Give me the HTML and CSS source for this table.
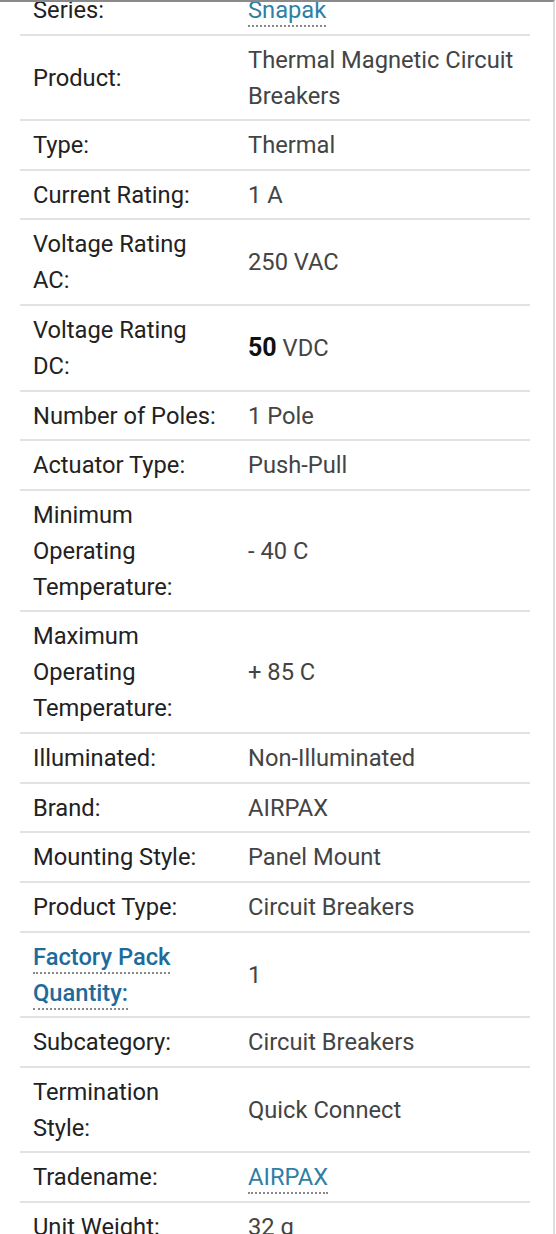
FILE: index.html
```html
<!DOCTYPE html>
<html>
<head>
<meta charset="utf-8">
<link rel="stylesheet" href="styles.css">
</head>
<body>
<div class="frame">
  <table class="specs">
    <colgroup><col class="c-label"><col class="c-value"></colgroup>
    <tr><th>Series:</th><td><a class="dot" href="#">Snapak</a></td></tr>
    <tr><th>Product:</th><td>Thermal Magnetic Circuit Breakers</td></tr>
    <tr><th>Type:</th><td>Thermal</td></tr>
    <tr><th>Current Rating:</th><td>1 A</td></tr>
    <tr><th>Voltage Rating AC:</th><td>250 VAC</td></tr>
    <tr><th>Voltage Rating DC:</th><td><b class="num">50</b> VDC</td></tr>
    <tr><th>Number of Poles:</th><td>1 Pole</td></tr>
    <tr><th>Actuator Type:</th><td>Push-Pull</td></tr>
    <tr><th>Minimum Operating Temperature:</th><td>- 40 C</td></tr>
    <tr><th>Maximum Operating Temperature:</th><td>+ 85 C</td></tr>
    <tr><th>Illuminated:</th><td>Non-Illuminated</td></tr>
    <tr><th>Brand:</th><td>AIRPAX</td></tr>
    <tr><th>Mounting Style:</th><td>Panel Mount</td></tr>
    <tr><th>Product Type:</th><td>Circuit Breakers</td></tr>
    <tr><th><a class="dot strong" href="#">Factory Pack Quantity:</a></th><td>1</td></tr>
    <tr><th>Subcategory:</th><td>Circuit Breakers</td></tr>
    <tr><th>Termination Style:</th><td>Quick Connect</td></tr>
    <tr><th>Tradename:</th><td><a class="dot" href="#">AIRPAX</a></td></tr>
    <tr><th>Unit Weight:</th><td>32 g</td></tr>
  </table>
</div>
</body>
</html>
```
FILE: styles.css
```css
html, body {
  margin: 0;
  padding: 0;
  background: #fff;
}
body {
  font-family: Roboto, "Noto Sans", sans-serif;
  overflow: hidden;
  height: 1234px;
}
.frame {
  width: 555px;
  height: 1234px;
  border-top: 2px solid #8a8a8a;
  border-right: 2px solid #dedede;
  box-sizing: border-box;
  overflow: hidden;
}
.specs {
  margin: -16px 0 0 20px;
  width: 510px;
  border-collapse: collapse;
  table-layout: fixed;
  font-size: 23.7px;
  line-height: 36px;
}
.c-label { width: 215px; }
.c-value { width: 295px; }
.specs th, .specs td {
  padding: 6px 13px 5.62px;
  border-bottom: 2px solid #e2e2e2;
  vertical-align: middle;
  text-align: left;
}
.specs th {
  font-weight: 400;
  color: #222;
}
.specs td {
  color: #444;
}
.num {
  font-weight: 700;
  color: #111;
  font-size: 25px;
}
.dot {
  text-decoration: none;
  color: #2f7fa5;
  border-bottom: 2px dotted #888;
  padding-bottom: 1px;
}
.dot.strong {
  color: #1d6b9c;
  font-weight: 500;
}
```
